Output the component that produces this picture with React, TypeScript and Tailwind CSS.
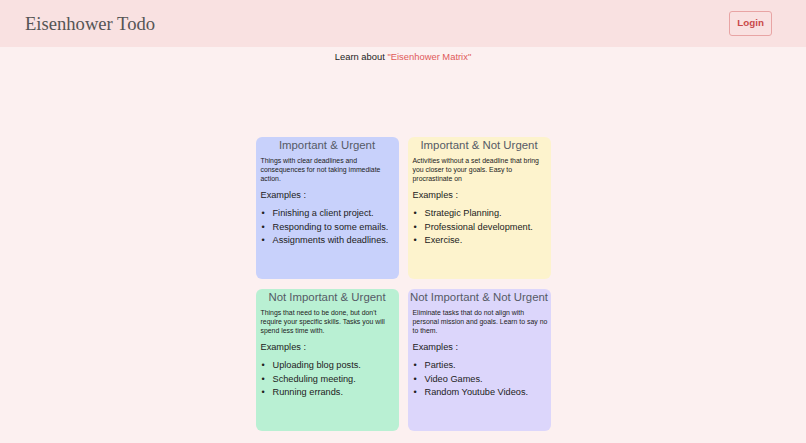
import React from "react";

type Quadrant = {
  title: string;
  desc: string;
  examples: string[];
  bg: string;
};

const quadrants: Quadrant[] = [
  {
    title: "Important & Urgent",
    desc: "Things with clear deadlines and consequences for not taking immediate action.",
    examples: ["Finishing a client project.", "Responding to some emails.", "Assignments with deadlines."],
    bg: "bg-[#c8d1fb]",
  },
  {
    title: "Important & Not Urgent",
    desc: "Activities without a set deadline that bring you closer to your goals. Easy to procrastinate on",
    examples: ["Strategic Planning.", "Professional development.", "Exercise."],
    bg: "bg-[#fdf3cd]",
  },
  {
    title: "Not Important & Urgent",
    desc: "Things that need to be done, but don't require your specific skills. Tasks you will spend less time with.",
    examples: ["Uploading blog posts.", "Scheduling meeting.", "Running errands."],
    bg: "bg-[#b9f0d3]",
  },
  {
    title: "Not Important & Not Urgent",
    desc: "Eliminate tasks that do not align with personal mission and goals. Learn to say no to them.",
    examples: ["Parties.", "Video Games.", "Random Youtube Videos."],
    bg: "bg-[#dcd6fb]",
  },
];

function Card({ q }: { q: Quadrant }) {
  return (
    <div className={`${q.bg} h-[142px] w-[143px] overflow-hidden rounded-md pl-[5px] pr-[2px]`}>
      <h2 className="-ml-[5px] -mr-[2px] whitespace-nowrap pt-[1px] text-center text-[11.4px] leading-[14px] text-[#555a66]">
        {q.title}
      </h2>
      <p className="mt-[4px] text-[6.9px] leading-[9px] text-[#222]">{q.desc}</p>
      <p className="mt-[6px] text-[9.2px] leading-[12px] text-[#222]">Examples :</p>
      <ul className="mt-[6px] text-[9.2px] leading-[13.5px] text-[#222]">
        {q.examples.map((e) => (
          <li key={e} className="flex">
            <span className="w-[12px] pl-[1px]">•</span>
            <span>{e}</span>
          </li>
        ))}
      </ul>
    </div>
  );
}

export default function App() {
  return (
    <div className="min-h-[443px] bg-[#fcf0f0] font-['Liberation_Sans',Arial,sans-serif]">
      <header className="flex h-[47px] items-center justify-between bg-[#f9e1e1] pl-[25px] pr-[34px]">
        <h1 className="font-['Liberation_Serif',serif] text-[18.6px] text-[#555]">Eisenhower Todo</h1>
        <button className="h-[25px] rounded-[3px] border border-[#e8a4a4] px-[7px] text-[9.8px] font-bold text-[#c94a4a]">
          Login
        </button>
      </header>
      <p className="mt-[3px] text-center text-[9.4px] text-[#222]">
        Learn about <span className="text-[#e05a5a]">"Eisenhower Matrix"</span>
      </p>
      <div className="mt-[73px] flex justify-center">
        <div className="grid grid-cols-[143px_143px] gap-x-[9px] gap-y-[10px]">
          {quadrants.map((q) => (
            <Card key={q.title} q={q} />
          ))}
        </div>
      </div>
    </div>
  );
}
